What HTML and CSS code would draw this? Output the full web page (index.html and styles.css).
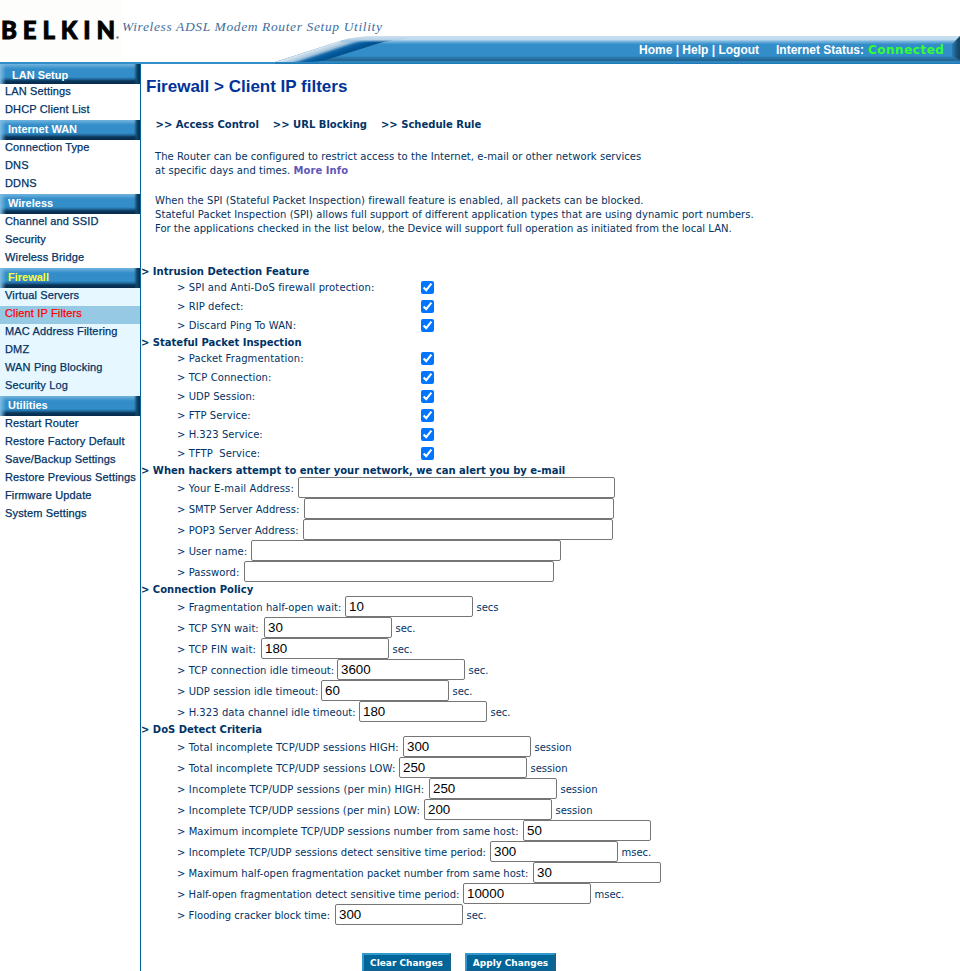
FILE: index.html
```html
<!DOCTYPE html>
<html lang="en">
<head>
<meta charset="utf-8">
<title>Wireless ADSL Modem Router Setup Utility</title>
<link rel="stylesheet" href="styles.css">
</head>
<body>
<header class="banner">
  <svg class="banner-art" width="960" height="64" viewBox="0 0 960 64">
    <defs>
      <linearGradient id="bar" x1="0" y1="36" x2="0" y2="64" gradientUnits="userSpaceOnUse">
        <stop offset="0" stop-color="#c9dff0"/><stop offset=".13" stop-color="#bddaee"/><stop offset=".2" stop-color="#73b2dc"/><stop offset=".3" stop-color="#328dc8"/><stop offset=".7" stop-color="#328dc8"/><stop offset=".87" stop-color="#21618d"/><stop offset=".92" stop-color="#328dc8"/><stop offset="1" stop-color="#1b76b0"/>
      </linearGradient>
      <linearGradient id="swoosh" x1="322" y1="47.500" x2="326.500" y2="61" gradientUnits="userSpaceOnUse">
        <stop offset="0" stop-color="#d5e4ef"/><stop offset=".28" stop-color="#a3c4de"/><stop offset=".5" stop-color="#1468a8"/><stop offset=".7" stop-color="#00579a"/><stop offset="1" stop-color="#064f86"/>
      </linearGradient>
      <linearGradient id="edge" x1="950" y1="0" x2="960" y2="0" gradientUnits="userSpaceOnUse">
        <stop offset="0" stop-color="#16577f" stop-opacity="0"/><stop offset=".7" stop-color="#184f74"/><stop offset="1" stop-color="#164563"/>
      </linearGradient>
      <linearGradient id="shine" x1="0" y1="36" x2="0" y2="43" gradientUnits="userSpaceOnUse">
        <stop offset="0" stop-color="#cfe0ee"/><stop offset=".55" stop-color="#b3d0e6"/><stop offset="1" stop-color="#5c9cc9" stop-opacity="0"/>
      </linearGradient>
    </defs>
    <rect width="121" height="57" fill="#fdfdfb"/>
    <rect y="62" width="960" height="2" fill="#328dc8"/>
    <path d="M275 62L340 41Q355 36 380 36H960V64H275Z" fill="url(#bar)"/>
    <path d="M275 62L340 41Q352 38 368 38H402Q392 40 378 43.500L329 59Q321 62 306 62Z" fill="url(#swoosh)"/>
    <path d="M340 41Q355 36 380 36H414Q402 41 385 42Q362 42 340 46Z" fill="url(#shine)"/>
    <path d="M960 36V60L952 56V44Z" fill="url(#edge)"/>
    <text class="logo" x="1" y="39" textLength="114" lengthAdjust="spacing">BELKIN</text>
    <circle cx="117.500" cy="37.500" r="1.200" fill="#777"/>
    <text class="tagline" x="122" y="31" textLength="260" lengthAdjust="spacing">Wireless ADSL Modem Router Setup Utility</text>
  </svg>
  <nav class="top-links"><span class="links">Home | Help | Logout</span><span class="status">Internet Status:</span><span class="connected">Connected</span></nav>
</header>
<div class="page">
  <aside class="sidebar">
    <h2 class="first">LAN Setup</h2>
    <ul><li>LAN Settings</li><li>DHCP Client List</li></ul>
    <h2>Internet WAN</h2>
    <ul><li>Connection Type</li><li>DNS</li><li>DDNS</li></ul>
    <h2>Wireless</h2>
    <ul><li>Channel and SSID</li><li>Security</li><li>Wireless Bridge</li></ul>
    <h2 class="current">Firewall</h2>
    <ul class="open"><li>Virtual Servers</li><li class="active">Client IP Filters</li><li>MAC Address Filtering</li><li>DMZ</li><li>WAN Ping Blocking</li><li>Security Log</li></ul>
    <h2>Utilities</h2>
    <ul><li>Restart Router</li><li>Restore Factory Default</li><li>Save/Backup Settings</li><li>Restore Previous Settings</li><li>Firmware Update</li><li>System Settings</li></ul>
  </aside>
  <main>
    <h1>Firewall &gt; Client IP filters</h1>
    <nav class="tabs"><span>&gt;&gt; Access Control</span><span>&gt;&gt; URL Blocking</span><span>&gt;&gt; Schedule Rule</span></nav>
    <p class="intro">The Router can be configured to restrict access to the Internet, e-mail or other network services<br>at specific days and times. <b>More Info</b></p>
    <p class="notes">When the SPI (Stateful Packet Inspection) firewall feature is enabled, all packets can be blocked.<br>Stateful Packet Inspection (SPI) allows full support of different application types that are using dynamic port numbers.<br><span class="last">For the applications checked in the list below, the Device will support full operation as initiated from the local LAN.</span></p>
    <form>
      <h3>&gt; Intrusion Detection Feature</h3>
      <div class="checks">
        <label><span>&gt; SPI and Anti-DoS firewall protection:</span><input type="checkbox" checked></label>
        <label><span>&gt; RIP defect:</span><input type="checkbox" checked></label>
        <label><span>&gt; Discard Ping To WAN:</span><input type="checkbox" checked></label>
      </div>
      <h3>&gt; Stateful Packet Inspection</h3>
      <div class="checks">
        <label><span>&gt; Packet Fragmentation:</span><input type="checkbox" checked></label>
        <label><span>&gt; TCP Connection:</span><input type="checkbox" checked></label>
        <label><span>&gt; UDP Session:</span><input type="checkbox" checked></label>
        <label><span>&gt; FTP Service:</span><input type="checkbox" checked></label>
        <label><span>&gt; H.323 Service:</span><input type="checkbox" checked></label>
        <label><span>&gt; TFTP&nbsp; Service:</span><input type="checkbox" checked></label>
      </div>
      <h3>&gt; When hackers attempt to enter your network, we can alert you by e-mail</h3>
      <div class="fields mail">
        <label><span>&gt; Your E-mail Address:</span><input type="text"></label>
        <label><span>&gt; SMTP Server Address:</span><input type="text"></label>
        <label><span>&gt; POP3 Server Address:</span><input type="text"></label>
        <label><span>&gt; User name:</span><input type="text"></label>
        <label><span>&gt; Password:</span><input type="password"></label>
      </div>
      <h3>&gt; Connection Policy</h3>
      <div class="fields policy">
        <label><span>&gt; Fragmentation half-open wait:</span><input type="text" value="10"><em>secs</em></label>
        <label><span>&gt; TCP SYN wait:</span><input type="text" value="30"><em>sec.</em></label>
        <label><span>&gt; TCP FIN wait:</span><input type="text" value="180"><em>sec.</em></label>
        <label><span>&gt; TCP connection idle timeout:</span><input type="text" value="3600"><em>sec.</em></label>
        <label><span>&gt; UDP session idle timeout:</span><input type="text" value="60"><em>sec.</em></label>
        <label><span>&gt; H.323 data channel idle timeout:</span><input type="text" value="180"><em>sec.</em></label>
      </div>
      <h3>&gt; DoS Detect Criteria</h3>
      <div class="fields dos">
        <label><span>&gt; Total incomplete TCP/UDP sessions HIGH:</span><input type="text" value="300"><em>session</em></label>
        <label><span>&gt; Total incomplete TCP/UDP sessions LOW:</span><input type="text" value="250"><em>session</em></label>
        <label><span>&gt; Incomplete TCP/UDP sessions (per min) HIGH:</span><input type="text" value="250"><em>session</em></label>
        <label><span>&gt; Incomplete TCP/UDP sessions (per min) LOW:</span><input type="text" value="200"><em>session</em></label>
        <label><span>&gt; Maximum incomplete TCP/UDP sessions number from same host:</span><input type="text" value="50"></label>
        <label><span>&gt; Incomplete TCP/UDP sessions detect sensitive time period:</span><input type="text" value="300"><em>msec.</em></label>
        <label><span>&gt; Maximum half-open fragmentation packet number from same host:</span><input type="text" value="30"></label>
        <label><span>&gt; Half-open fragmentation detect sensitive time period:</span><input type="text" value="10000"><em>msec.</em></label>
        <label><span>&gt; Flooding cracker block time:</span><input type="text" value="300"><em>sec.</em></label>
      </div>
      <div class="actions"><button type="button" class="clear">Clear Changes</button><button type="button" class="apply">Apply Changes</button></div>
    </form>
  </main>
</div>
</body>
</html>
```
FILE: styles.css
```css
* { box-sizing: border-box; }
body { margin: 0; height: 971px; overflow: hidden; background: #fff; color: #036; font: 10px/14px "DejaVu Sans", sans-serif; }
h1, h2, h3, p, ul { margin: 0; padding: 0; }

.banner { position: relative; height: 64px; }
.banner-art { display: block; }
.logo { font: 900 24px Lato, sans-serif; fill: #000; stroke: #000; stroke-width: .9px; }
.tagline { font: italic 13.5px "Liberation Serif", serif; fill: #3f6fa0; }
.top-links { position: absolute; top: 43px; left: 639px; display: flex; color: #fff; font: bold 12px/15px "Liberation Sans", sans-serif; white-space: nowrap; }
.links { width: 137px; }
.status { width: 92px; }
.connected { color: #3f3; font: bold 12px/15px "DejaVu Sans", sans-serif; letter-spacing: .5px; }

.page { display: flex; height: 907px; }
.sidebar { width: 141px; border-right: 1px solid #069; font: 11px/14px "Liberation Sans", sans-serif; letter-spacing: .15px; white-space: nowrap; }
.sidebar h2 {
  height: 20px; padding: 3px 0 0 8px; color: #fff; font: bold 11px/13px "Liberation Sans", sans-serif; letter-spacing: 0;
  background:
    linear-gradient(to right, #7dbbe2, #328dc800 6px, #328dc800 134px, #14456b 137px, #092a47),
    linear-gradient(#72b4de, #328dc8 5px, #328dc8 13px, #1f6a9f 15px, #0b3659 17px, #052b4d);
}
.sidebar h2.first { padding: 5px 0 0 12px; }
.sidebar h2.current { color: #ff3; }
.sidebar ul { list-style: none; }
.sidebar li { height: 18px; padding: 0 0 0 5px; color: #036; -webkit-text-stroke: .25px; }
.sidebar .open { background: #e6f7ff; }
.sidebar .active { background: #96cae4; color: #f00; }

main { flex: 1; white-space: nowrap; }
h1 { margin: 12px 0 0 5px; color: #039; font: bold 17px/22px "Liberation Sans", sans-serif; }
.tabs { display: flex; margin: 20px 0 0 14.5px; font-weight: bold; }
.tabs span + span { margin-left: 14px; }
.intro { margin: 18px 0 0 14px; letter-spacing: .05px; }
.intro b { color: #6058b8; }
.notes { margin: 16px 0 0 14px; letter-spacing: .06px; }
.last { letter-spacing: .015px; }
form { margin-top: 28px; }
h3 { padding-top: 1px; height: 14px; font: bold 10px/14px "DejaVu Sans", sans-serif; }
.checks label, .fields label { display: flex; align-items: center; padding-left: 36px; letter-spacing: .07px; }
.checks label { height: 19px; }
.checks label:first-child { letter-spacing: .12px; }
.checks span { width: 244px; }
.checks input { width: 13px; height: 13px; margin: 0; accent-color: #0075ff; }
.fields label { height: 21px; }
.fields span { flex: none; line-height: 16px; padding-top: 2px; }
.fields input { flex: none; width: 128px; height: 21px; padding: 1px 3px; border: 1px solid #767676; border-radius: 2px; background: #fff; color: #000; font: 13.33px "Liberation Sans", sans-serif; }
.fields em { margin-left: 3.5px; padding-top: 2px; font-style: normal; letter-spacing: 0; }
.mail input { width: 310px; }
.mail label:nth-child(1) input { width: 317px; }
.mail label:nth-child(1) span { width: 121px; letter-spacing: .14px; }
.mail label:nth-child(2) span { width: 127px; }
.mail label:nth-child(3) span { width: 126px; }
.mail label:nth-child(4) span { width: 74px; }
.mail label:nth-child(5) span { width: 67px; }
.policy label:nth-child(1) span { width: 168px; }
.policy label:nth-child(2) span { width: 87px; }
.policy label:nth-child(3) span { width: 84px; letter-spacing: .14px; }
.policy label:nth-child(4) span { width: 160px; }
.policy label:nth-child(5) span { width: 144px; }
.policy label:nth-child(6) span { width: 182px; }
.dos label:nth-child(1) span { width: 226px; letter-spacing: .1px; }
.dos label:nth-child(2) span { width: 222px; letter-spacing: .1px; }
.dos label:nth-child(3) span { width: 252px; letter-spacing: .14px; }
.dos label:nth-child(4) span { width: 247px; letter-spacing: .12px; }
.dos label:nth-child(5) span { width: 346px; letter-spacing: .05px; }
.dos label:nth-child(6) span { width: 313px; letter-spacing: .05px; }
.dos label:nth-child(7) span { width: 356px; letter-spacing: .03px; }
.dos label:nth-child(8) span { width: 286px; letter-spacing: .02px; }
.dos label:nth-child(9) span { width: 158px; letter-spacing: 0; }
.actions { display: flex; gap: 14px; margin: 28px 0 0 221px; }
.actions button { height: 19px; padding: 0; border: 2px solid; border-color: #3399cc #1c5f88 #1c5f88 #3399cc; background: #069; color: #fff; font: bold 9px/14px "DejaVu Sans", sans-serif; }
.clear { width: 89px; }
.apply { width: 91px; }
```
